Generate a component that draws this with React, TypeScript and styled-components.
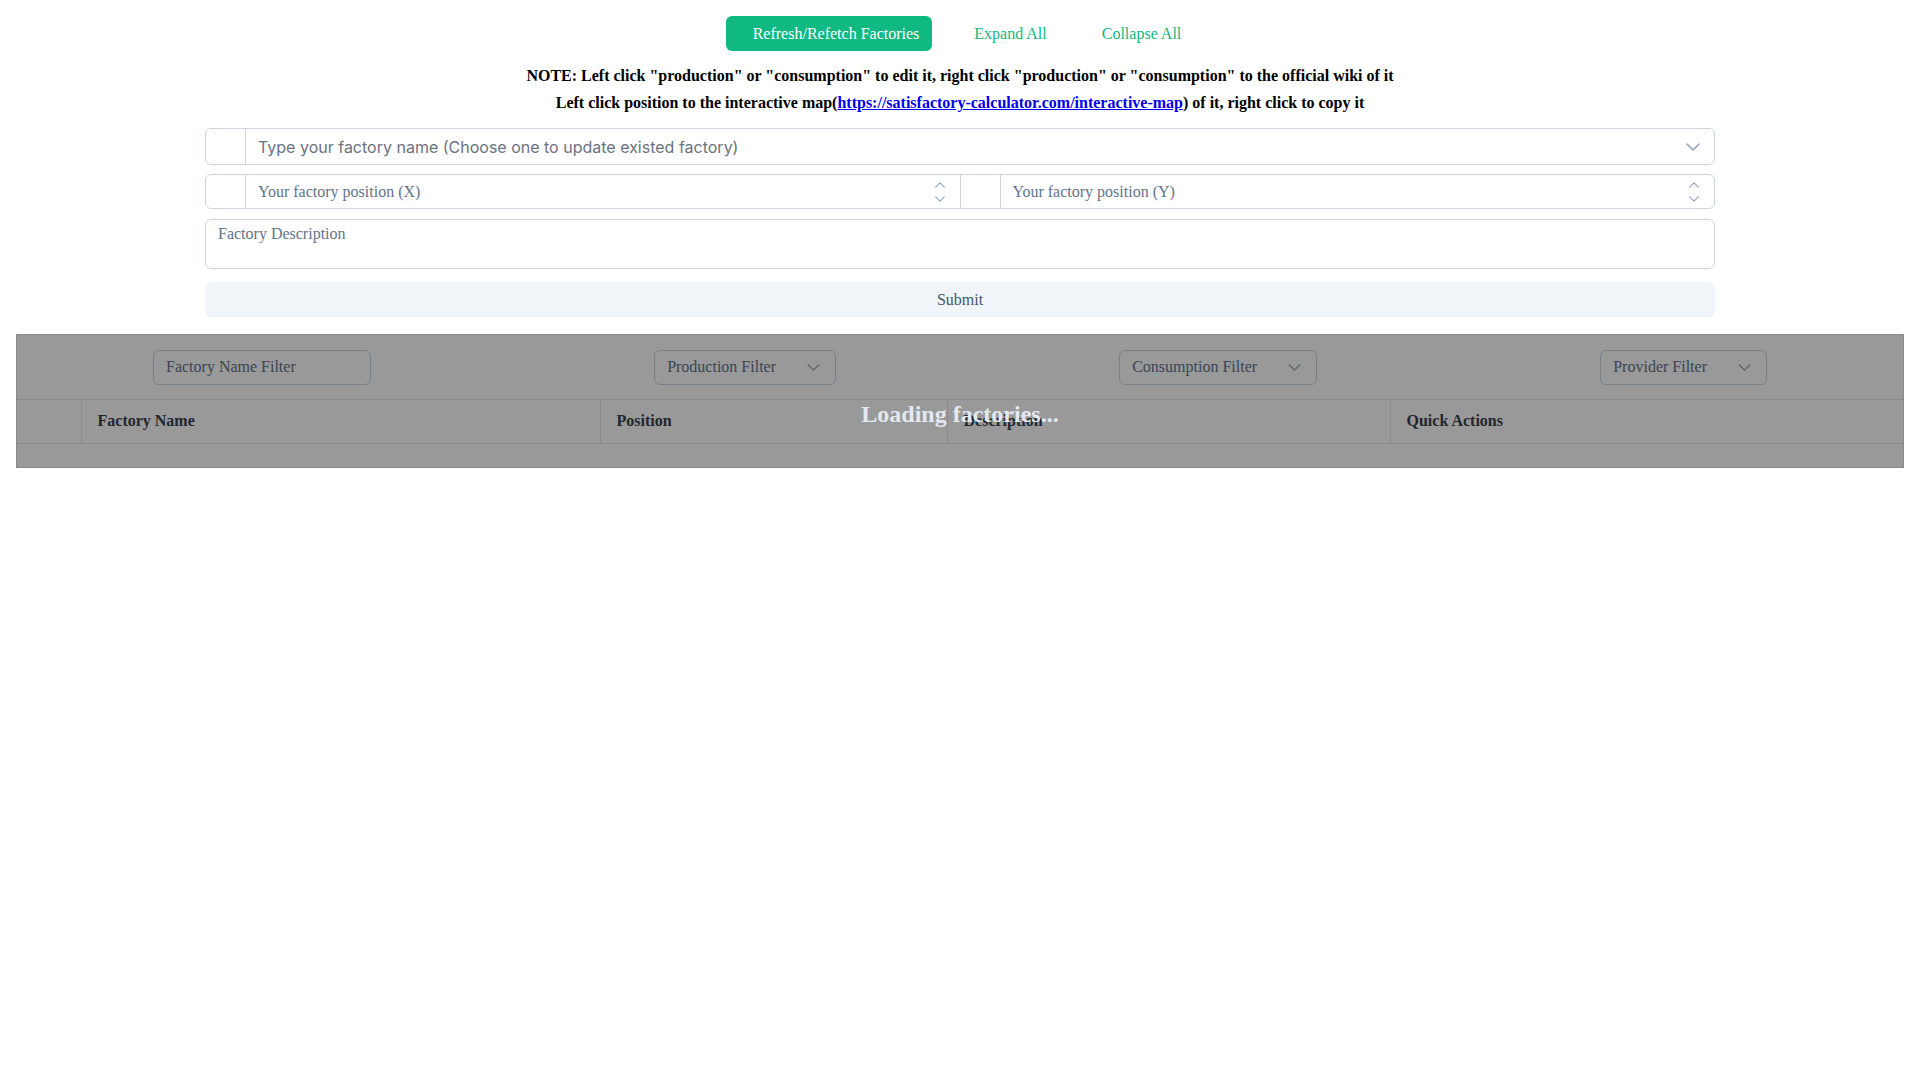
import React from 'react'
import styled, { createGlobalStyle, css } from 'styled-components'

const GREEN = '#10b981'
const BORDER = '#cbd5e1'
const LINE = '#e5e7eb'
const MUTED = '#64748b'

const GlobalStyle = createGlobalStyle`
  html, body {
    margin: 0;
    background: #ffffff;
    font-family: "Liberation Serif", "Times New Roman", serif;
    font-size: 16px;
  }
  * {
    box-sizing: border-box;
  }
`

const Page = styled.div`
  padding: 16px;
`

const Toolbar = styled.div`
  display: flex;
  justify-content: center;
  gap: 15px;
`

const ToolButton = styled.button<{ primary?: boolean }>`
  height: 35px;
  padding: 0 13px 0 27px;
  border: 0;
  border-radius: 6px;
  font-family: inherit;
  font-size: 16px;
  cursor: pointer;
  ${(props) =>
    props.primary
      ? css`
          background: ${GREEN};
          color: #ffffff;
        `
      : css`
          background: transparent;
          color: ${GREEN};
        `}
`

const Note = styled.div`
  margin: 11px 0 12px;
  text-align: center;
  font-weight: bold;
  line-height: 27px;
  color: #000000;

  a {
    color: #0000ee;
  }
`

const Form = styled.div`
  width: 1510px;
  margin: 0 auto;
  display: flex;
  flex-direction: column;
`

const InputGroup = styled.div<{ height: number; gapAfter: number }>`
  display: flex;
  align-items: stretch;
  height: ${(props) => props.height}px;
  margin-bottom: ${(props) => props.gapAfter}px;
  border: 1px solid ${BORDER};
  border-radius: 6px;
  background: #ffffff;
  overflow: hidden;
`

const Addon = styled.div<{ leftBorder?: boolean }>`
  width: 40px;
  flex: none;
  border-right: 1px solid ${BORDER};
  ${(props) => props.leftBorder && `border-left: 1px solid ${BORDER}; width: 41px;`}
`

const Field = styled.div`
  flex: 1;
  display: flex;
  align-items: center;
  min-width: 0;
`

const TextInput = styled.input<{ sans?: boolean }>`
  flex: 1;
  min-width: 0;
  height: 100%;
  border: 0;
  outline: none;
  padding: 0 12px;
  background: transparent;
  font-size: 16px;
  font-family: ${(props) =>
    props.sans ? 'Inter, "Noto Sans", sans-serif' : '"Liberation Serif", serif'};

  &::placeholder {
    color: ${(props) => (props.sans ? '#6b7280' : MUTED)};
    opacity: 1;
  }
`

const ComboChevron = styled.span`
  display: flex;
  margin-right: 14px;
  color: #94a3b8;
`

const Spinner = styled.div`
  display: flex;
  flex-direction: column;
  gap: 8px;
  margin-right: 15px;
  color: #94a3b8;
`

const Description = styled.textarea`
  height: 50px;
  margin-bottom: 13px;
  padding: 5px 12px;
  border: 1px solid ${BORDER};
  border-radius: 6px;
  resize: none;
  outline: none;
  font-family: "Liberation Serif", serif;
  font-size: 16px;

  &::placeholder {
    color: ${MUTED};
    opacity: 1;
  }
`

const SubmitButton = styled.button`
  height: 35px;
  border: 0;
  border-radius: 6px;
  background: #f1f5f9;
  color: #475569;
  font-family: inherit;
  font-size: 16px;
  cursor: pointer;
`

const TableCard = styled.div`
  position: relative;
  margin-top: 17px;
  border: 1px solid ${LINE};
  background: #ffffff;
`

const FilterBar = styled.div`
  height: 65px;
  display: flex;
  align-items: center;
  justify-content: space-between;
  padding: 0 136px;
  border-bottom: 1px solid ${LINE};
`

const FilterInput = styled.input`
  width: 218px;
  height: 35px;
  padding: 0 12px;
  border: 1px solid ${BORDER};
  border-radius: 6px;
  outline: none;
  font-family: "Liberation Serif", serif;
  font-size: 16px;

  &::placeholder {
    color: ${MUTED};
    opacity: 1;
  }
`

const FilterSelect = styled.button`
  height: 35px;
  display: inline-flex;
  align-items: center;
  gap: 31px;
  padding: 0 15px 0 12px;
  border: 1px solid ${BORDER};
  border-radius: 6px;
  background: #ffffff;
  color: ${MUTED};
  font-family: "Liberation Serif", serif;
  font-size: 16px;

  svg {
    color: #94a3b8;
  }
`

const Table = styled.table`
  width: 100%;
  border-collapse: collapse;
  table-layout: fixed;
`

const HeaderCell = styled.th`
  height: 43px;
  padding: 0 16px;
  text-align: left;
  font-weight: bold;
  color: #374151;
  border-bottom: 1px solid ${LINE};
  border-left: 1px solid ${LINE};

  &:first-child {
    border-left: 0;
  }
`

const EmptyCell = styled.td`
  height: 24px;
`

const Overlay = styled.div`
  position: absolute;
  inset: -1px;
  background: rgba(0, 0, 0, 0.4);
`

const LoadingText = styled.div`
  position: absolute;
  top: 66px;
  left: 0;
  right: 0;
  text-align: center;
  font-size: 24px;
  font-weight: bold;
  color: #e2e8f0;
`

const Chevron: React.FC<{ up?: boolean; width?: number; height?: number }> = ({
  up,
  width = 14,
  height = 8
}) => (
  <svg width={width} height={height} viewBox='0 0 14 8' fill='none'>
    <path
      d={up ? 'M1 7L7 1L13 7' : 'M1 1L7 7L13 1'}
      stroke='currentColor'
      strokeWidth='1.6'
      strokeLinecap='round'
      strokeLinejoin='round'
    />
  </svg>
)

const NumberSpinner = () => (
  <Spinner>
    <Chevron up width={10} height={6} />
    <Chevron width={10} height={6} />
  </Spinner>
)

const columns = [
  { label: '', width: 64 },
  { label: 'Factory Name', width: 519 },
  { label: 'Position', width: 347 },
  { label: 'Description', width: 443 },
  { label: 'Quick Actions', width: 513 }
]

const App: React.FC = () => {
  return (
    <Page>
      <GlobalStyle />
      <Toolbar>
        <ToolButton primary>Refresh/Refetch Factories</ToolButton>
        <ToolButton>Expand All</ToolButton>
        <ToolButton>Collapse All</ToolButton>
      </Toolbar>

      <Note>
        <div>
          NOTE: Left click "production" or "consumption" to edit it, right click "production" or
          "consumption" to the official wiki of it
        </div>
        <div>
          Left click position to the interactive map(
          <a href='#'>https://satisfactory-calculator.com/interactive-map</a>) of it, right click to
          copy it
        </div>
      </Note>

      <Form>
        <InputGroup height={37} gapAfter={9}>
          <Addon />
          <Field>
            <TextInput sans placeholder='Type your factory name (Choose one to update existed factory)' />
            <ComboChevron>
              <Chevron />
            </ComboChevron>
          </Field>
        </InputGroup>

        <InputGroup height={35} gapAfter={10}>
          <Addon />
          <Field>
            <TextInput placeholder='Your factory position (X)' />
            <NumberSpinner />
          </Field>
          <Addon leftBorder />
          <Field>
            <TextInput placeholder='Your factory position (Y)' />
            <NumberSpinner />
          </Field>
        </InputGroup>

        <Description placeholder='Factory Description' />
        <SubmitButton>Submit</SubmitButton>
      </Form>

      <TableCard>
        <FilterBar>
          <FilterInput placeholder='Factory Name Filter' />
          <FilterSelect>
            Production Filter
            <Chevron width={13} height={7} />
          </FilterSelect>
          <FilterSelect>
            Consumption Filter
            <Chevron width={13} height={7} />
          </FilterSelect>
          <FilterSelect>
            Provider Filter
            <Chevron width={13} height={7} />
          </FilterSelect>
        </FilterBar>
        <Table>
          <colgroup>
            {columns.map((column, index) => (
              <col key={index} style={{ width: column.width }} />
            ))}
          </colgroup>
          <thead>
            <tr>
              {columns.map((column, index) => (
                <HeaderCell key={index}>{column.label}</HeaderCell>
              ))}
            </tr>
          </thead>
          <tbody>
            <tr>
              <EmptyCell colSpan={5} />
            </tr>
          </tbody>
        </Table>
        <Overlay />
        <LoadingText>Loading factories...</LoadingText>
      </TableCard>
    </Page>
  )
}

export default App
